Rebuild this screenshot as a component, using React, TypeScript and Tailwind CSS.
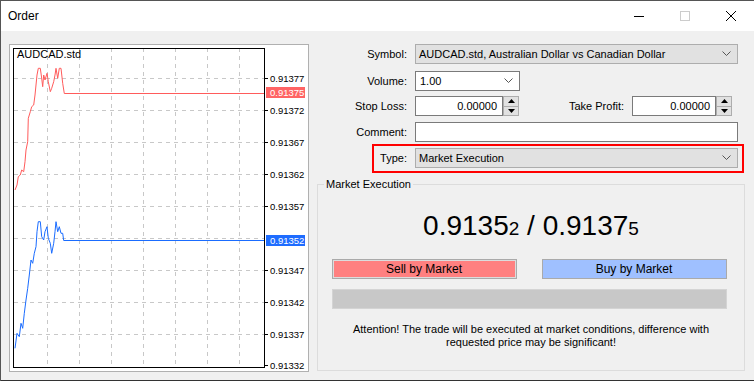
import React from 'react';

const font = { fontFamily: '"Liberation Sans", Arial, sans-serif' };

const red: [number, number][] = [
    [42, 465], [48, 450], [52, 425], [58, 420], [62, 405], [68, 410], [72, 380], [75, 345], [80, 320], [82, 250],
    [88, 230], [92, 215], [98, 210], [102, 180], [108, 120], [112, 100], [118, 100], [122, 130], [125, 155],
    [128, 120], [132, 135], [138, 115], [142, 140], [148, 170], [152, 160], [158, 140], [162, 120], [165, 100],
    [170, 130], [175, 100], [180, 100], [185, 145], [190, 175.5], [790, 175.5],
];

const blue: [number, number][] = [
    [42, 445], [48, 400], [55, 410], [60, 370], [65, 385], [70, 340], [75, 300], [80, 265], [85, 225], [90, 180],
    [95, 190], [100, 160], [105, 140], [108, 95], [112, 65], [118, 65], [122, 110], [128, 120], [132, 95],
    [138, 80], [142, 115], [148, 130], [152, 160], [158, 130], [162, 95], [165, 65], [170, 95], [175, 80],
    [180, 100], [185, 100], [188, 121.5], [790, 121.5],
];

const toPts = (pts: [number, number][], dy: number) =>
    pts.map(([x, y]) => `${(x / 3).toFixed(1)},${(y / 3 + dy).toFixed(1)}`).join(' ');

const levels = [
    { y: 78, v: '0.91377' },
    { y: 110, v: '0.91372' },
    { y: 142, v: '0.91367' },
    { y: 174, v: '0.91362' },
    { y: 206, v: '0.91357' },
    { y: 270, v: '0.91347' },
    { y: 302, v: '0.91342' },
    { y: 334, v: '0.91337' },
    { y: 365, v: '0.91332' },
];

const Chevron = () => (
    <svg width="9" height="6" viewBox="0 0 9 6" className="shrink-0">
        <polyline points="0.5,0.5 4.5,4.5 8.5,0.5" fill="none" stroke="#555" strokeWidth="1" />
    </svg>
);

const Spinner = () => (
    <div className="flex flex-col w-[16px] h-[20px] border border-[#adadad] bg-[#e1e1e1]">
        <div className="flex-1 flex items-center justify-center border-b border-[#adadad]">
            <svg width="7" height="4" viewBox="0 0 7 4"><polygon points="0,4 3.5,0 7,4" fill="#000" /></svg>
        </div>
        <div className="flex-1 flex items-center justify-center">
            <svg width="7" height="4" viewBox="0 0 7 4"><polygon points="0,0 3.5,4 7,0" fill="#000" /></svg>
        </div>
    </div>
);

const PriceText = ({ x, y, fill, children }: { x: number; y: number; fill: string; children: string }) => (
    <text x={x} y={y} fontSize="9.5" fill={fill}>{children}</text>
);

const Chart: React.FC = () => (
    <div className="mt-[13px] ml-[8px] w-[300px] h-[328px] border border-[#b0b0b0] bg-white">
        <svg width="298" height="326" viewBox="9 45 298 326" style={font}>
            {[46, 78, 110, 142, 174, 206, 238].map((x) => (
                <line key={x} x1={x + 0.5} y1={48} x2={x + 0.5} y2={367} stroke="#c8c8c8" strokeDasharray="4 4" />
            ))}
            {[78, 110, 142, 174, 206, 238, 270, 302, 334].map((y) => (
                <line key={y} x1={13} y1={y + 0.5} x2={263} y2={y + 0.5} stroke="#c8c8c8" strokeDasharray="4 4" />
            ))}
            <polyline points={toPts(red, 35)} fill="none" stroke="#ff5b5b" strokeWidth="1" />
            <polyline points={toPts(blue, 200)} fill="none" stroke="#1a6cff" strokeWidth="1" />
            <rect x={12.5} y={48.5} width={251} height={319} fill="none" stroke="#000" />
            {levels.map((l) => (
                <g key={l.v}>
                    <line x1={264} y1={l.y + 0.5} x2={267} y2={l.y + 0.5} stroke="#000" />
                    <PriceText x={269} y={l.y + 4} fill="#000">{l.v}</PriceText>
                </g>
            ))}
            <rect x={265} y={87} width={39} height={11} fill="#ff6464" />
            <PriceText x={269} y={96} fill="#fff">0.91375</PriceText>
            <rect x={265} y={235} width={39} height={11} fill="#1e6cff" />
            <PriceText x={269} y={244} fill="#fff">0.91352</PriceText>
            <text x={16} y={58} fontSize="11" fill="#000">AUDCAD.std</text>
        </svg>
    </div>
);

export default function App() {
    return (
        <div className="w-[754px] h-[381px] bg-[#f0f0f0] border-t border-l border-[#555] flex flex-col text-[11px] text-black overflow-hidden" style={font}>
            <div className="h-[30px] bg-white flex items-center shrink-0">
                <span className="ml-[7px] text-[12px]">Order</span>
                <div className="ml-auto flex items-center">
                    <div className="w-[46px] flex justify-center">
                        <div className="w-[10px] h-px bg-black" />
                    </div>
                    <div className="w-[46px] flex justify-center">
                        <div className="w-[10px] h-[10px] border border-[#cccccc]" />
                    </div>
                    <div className="w-[46px] flex justify-center">
                        <svg width="10" height="10" viewBox="0 0 10 10">
                            <line x1="0" y1="0" x2="10" y2="10" stroke="#000" />
                            <line x1="10" y1="0" x2="0" y2="10" stroke="#000" />
                        </svg>
                    </div>
                </div>
            </div>
            <div className="flex flex-1 border-b border-[#333]">
                <Chart />
                <div className="ml-[8px] mt-[13px] w-[428px] flex flex-col">
                    <div className="flex items-center gap-2 h-[20px]">
                        <span className="w-[90px] text-right">Symbol:</span>
                        <div className="w-[323px] h-[20px] bg-[#e1e1e1] border border-[#adadad] flex items-center px-[3px]">
                            <span>AUDCAD.std, Australian Dollar vs Canadian Dollar</span>
                            <span className="ml-auto mr-[3px]"><Chevron /></span>
                        </div>
                    </div>
                    <div className="flex items-center gap-2 h-[20px] mt-[7px]">
                        <span className="w-[90px] text-right">Volume:</span>
                        <div className="w-[105px] h-[20px] bg-white border border-[#7a7a7a] flex items-center px-[4px]">
                            <span>1.00</span>
                            <span className="ml-auto mr-[2px]"><Chevron /></span>
                        </div>
                    </div>
                    <div className="flex items-center h-[20px] mt-[5px]">
                        <span className="w-[90px] text-right">Stop Loss:</span>
                        <div className="ml-2 w-[88px] h-[20px] bg-white border border-[#7a7a7a] flex items-center justify-end pr-[5px]">0.00000</div>
                        <Spinner />
                        <span className="w-[105px] text-right">Take Profit:</span>
                        <div className="ml-[8px] w-[84px] h-[20px] bg-white border border-[#7a7a7a] flex items-center justify-end pr-[5px]">0.00000</div>
                        <Spinner />
                    </div>
                    <div className="flex items-center gap-2 h-[20px] mt-[6px]">
                        <span className="w-[90px] text-right">Comment:</span>
                        <div className="w-[323px] h-[20px] bg-white border border-[#7a7a7a]" />
                    </div>
                    <div className="ml-[55px] mt-[2px] w-[372px] border-2 border-[#ff0000] flex items-center gap-2 pt-[2px] pb-[3px] pr-[4px]">
                        <span className="w-[33px] text-right">Type:</span>
                        <div className="flex-1 h-[20px] bg-[#e1e1e1] border border-[#adadad] flex items-center px-[3px]">
                            <span>Market Execution</span>
                            <span className="ml-auto mr-[3px]"><Chevron /></span>
                        </div>
                    </div>
                    <fieldset className="mt-[3px] w-[428px] h-[195px] border border-[#dcdcdc] flex flex-col items-center">
                        <legend className="ml-[6px] px-[2px]">Market Execution</legend>
                        <div className="mt-[16px] text-[28px] leading-[34px] text-[#000]">
                            0.9135<span className="text-[19px]">2</span> / 0.9137<span className="text-[19px]">5</span>
                        </div>
                        <div className="mt-[13px] flex gap-[25px] -ml-[4px]">
                            <button className="w-[185px] h-[20px] bg-[#ff8080] border border-[#aaaaaa] outline outline-1 outline-[#dcdcdc] -outline-offset-2 text-[12px]" style={font}>Sell by Market</button>
                            <button className="w-[185px] h-[20px] bg-[#9fc0ff] border border-[#aaaaaa] text-[12px]" style={font}>Buy by Market</button>
                        </div>
                        <div className="mt-[10px] w-[395px] h-[20px] bg-[#c8c8c8] border border-[#d4d4d4] -ml-[3px]" />
                        <p className="mt-[14px] text-center leading-[13px] w-[380px]">
                            Attention! The trade will be executed at market conditions, difference with<br />requested price may be significant!
                        </p>
                    </fieldset>
                </div>
            </div>
        </div>
    );
}
